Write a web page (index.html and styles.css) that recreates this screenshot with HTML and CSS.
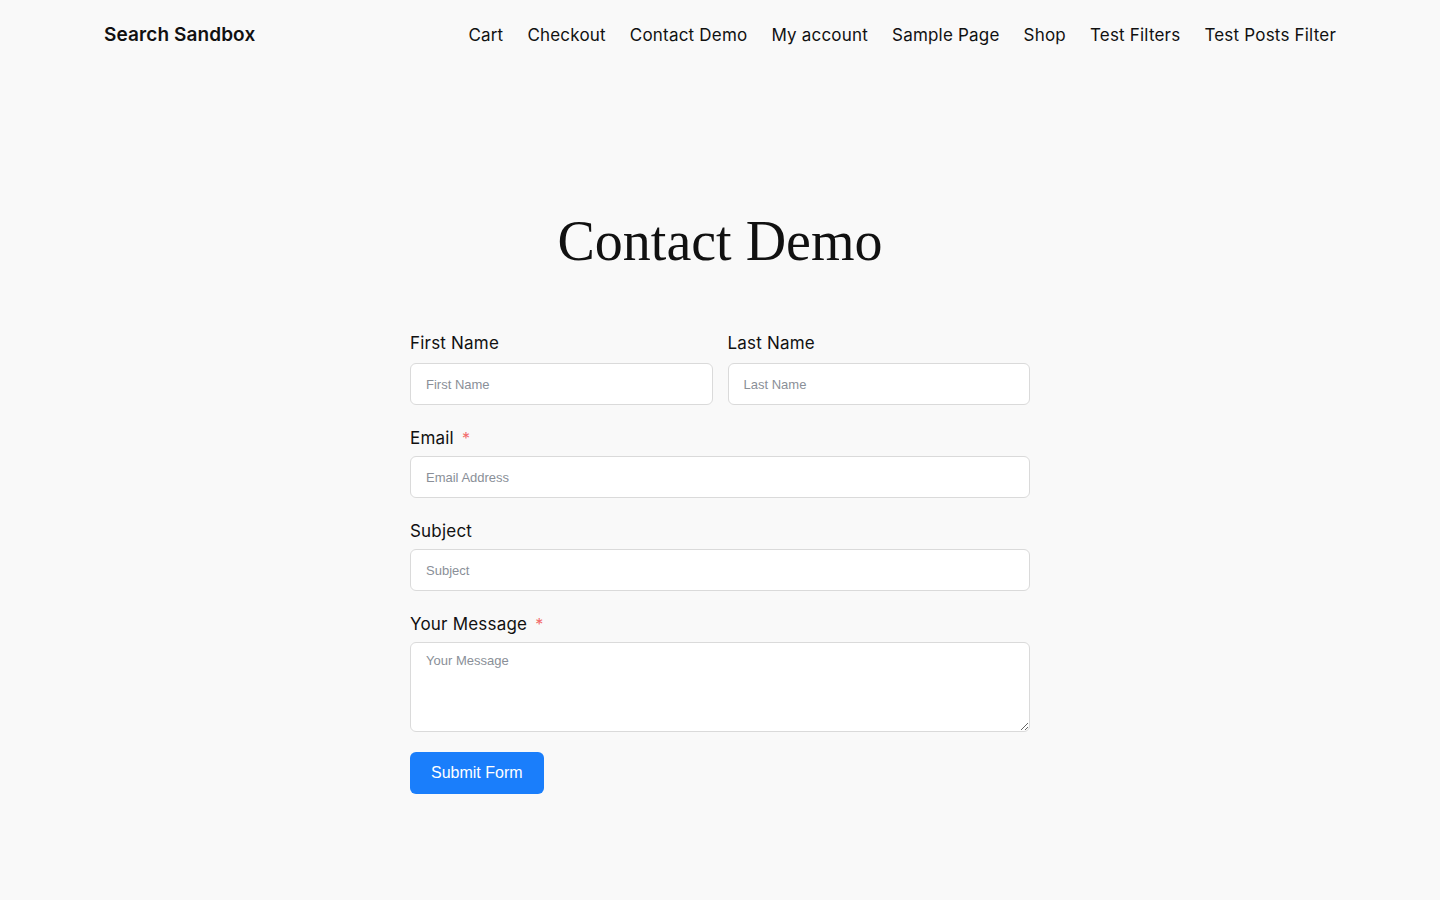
FILE: index.html
```html
<!DOCTYPE html>
<html lang="en">
<head>
<meta charset="utf-8">
<title>Contact Demo – Search Sandbox</title>
<link rel="stylesheet" href="styles.css">
</head>
<body>
<header class="site-header">
  <a class="site-title" href="#">Search Sandbox</a>
  <nav class="site-nav">
    <a href="#">Cart</a>
    <a href="#">Checkout</a>
    <a href="#">Contact Demo</a>
    <a href="#">My account</a>
    <a href="#">Sample Page</a>
    <a href="#">Shop</a>
    <a href="#">Test Filters</a>
    <a href="#">Test Posts Filter</a>
  </nav>
</header>
<main class="content">
  <h1 class="page-title">Contact Demo</h1>
  <form class="contact-form">
    <div class="row">
      <div class="field">
        <label class="label">First Name</label>
        <input class="input" type="text" placeholder="First Name">
      </div>
      <div class="field">
        <label class="label">Last Name</label>
        <input class="input" type="text" placeholder="Last Name">
      </div>
    </div>
    <div class="field">
      <label class="label">Email <span class="req">*</span></label>
      <input class="input" type="email" placeholder="Email Address">
    </div>
    <div class="field">
      <label class="label">Subject</label>
      <input class="input" type="text" placeholder="Subject">
    </div>
    <div class="field field-last">
      <label class="label">Your Message <span class="req">*</span></label>
      <textarea class="input textarea" placeholder="Your Message"></textarea>
    </div>
    <button class="submit" type="button">Submit Form</button>
  </form>
</main>
</body>
</html>
```
FILE: styles.css
```css
* { box-sizing: border-box; }
html, body { margin: 0; padding: 0; }
body {
  background: #f9f9f9;
  color: #111;
  font-family: Inter, "Noto Sans", sans-serif;
  font-size: 17px;
}
a { color: inherit; text-decoration: none; }

.site-header {
  display: flex;
  align-items: center;
  justify-content: space-between;
  height: 69px;
  padding: 0 104px;
}
.site-title {
  font-size: 19px;
  font-weight: 600;
  letter-spacing: 0.1px;
}
.site-nav {
  display: flex;
  gap: 24px;
  font-size: 17px;
  letter-spacing: 0.2px;
}

.content {
  width: 620px;
  margin: 0 auto;
  padding-top: 138px;
}
.page-title {
  margin: 0 0 57px;
  text-align: center;
  font-family: "Liberation Serif", "DejaVu Serif", serif;
  font-weight: 400;
  font-size: 56px;
  line-height: 68px;
  color: #111;
}

.contact-form { display: flex; flex-direction: column; }
.row {
  display: grid;
  grid-template-columns: 1fr 1fr;
  gap: 15px;
  margin-bottom: 22px;
}
.field { margin-bottom: 22px; display: flex; flex-direction: column; }
.row .field { margin-bottom: 0; }
.field-last { margin-bottom: 20px; }
.label {
  display: block;
  font-size: 17px;
  line-height: 22px;
  margin-bottom: 7px;
  letter-spacing: 0.2px;
  color: #111;
}
.row .label { margin-bottom: 9px; }
.req { color: #f26b6b; margin-left: 3px; font-size: 16px; vertical-align: top; }
.input {
  display: block;
  width: 100%;
  height: 42px;
  padding: 0 15px;
  background: #fff;
  border: 1px solid #dadada;
  border-radius: 6px;
  font-family: "Liberation Sans", Arial, sans-serif;
  font-size: 13px;
  color: #222;
  outline: none;
}
.input::placeholder { color: #8a8f98; }
.textarea {
  height: 90px;
  padding: 10px 15px;
  resize: vertical;
}
.submit {
  align-self: flex-start;
  height: 42px;
  padding: 0 21px;
  background: #1a7efb;
  color: #fff;
  border: none;
  border-radius: 6px;
  font-family: "Liberation Sans", Arial, sans-serif;
  font-size: 16px;
  cursor: pointer;
}
```
